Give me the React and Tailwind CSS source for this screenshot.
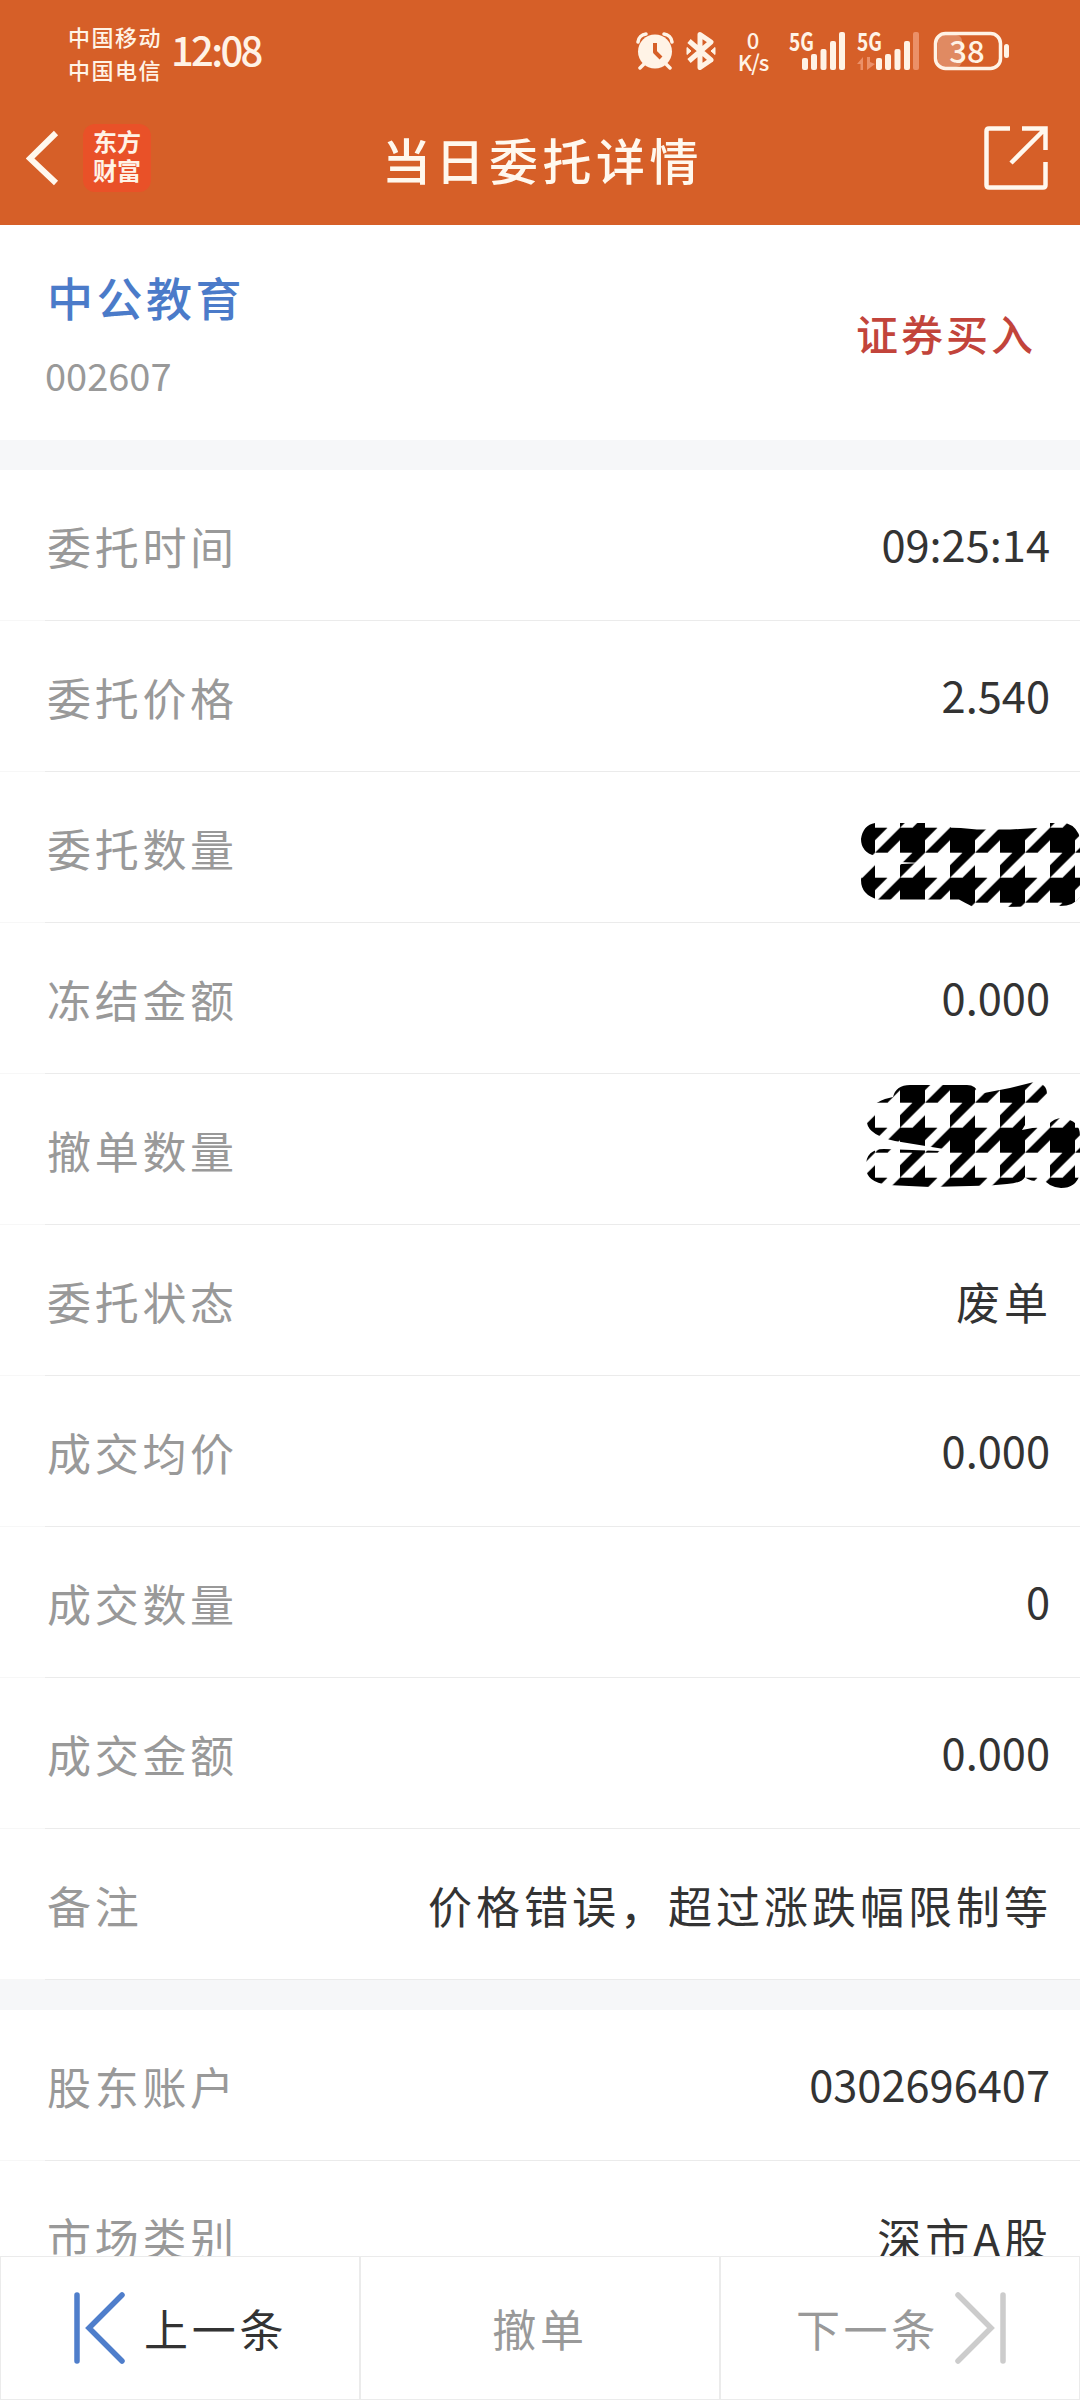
const orderRows = [
  { label: "委托时间", value: "09:25:14" },
  { label: "委托价格", value: "2.540" },
  { label: "委托数量", mask: "quantity" },
  { label: "冻结金额", value: "0.000" },
  { label: "撤单数量", mask: "cancelled" },
  { label: "委托状态", value: "废单", cjk: true },
  { label: "成交均价", value: "0.000" },
  { label: "成交数量", value: "0" },
  { label: "成交金额", value: "0.000" },
  { label: "备注", value: "价格错误，超过涨跌幅限制等", cjk: true },
];

const accountRows = [
  { label: "股东账户", value: "0302696407" },
  { label: "市场类别", value: "深市A股", cjk: true },
];

// scribbled areas that hide the quantities, 240x151 each
const masks = {
  quantity: {
    offset: 5.7,
    path: "M35 51 H85 L110 55 L137 57.5 H170 L196 56 L205 51 H226 Q238 55 240 67 V125 Q234 134 220 134 L160 135 H133 Q124 130 119 127.5 H38 Q21 123 21 108 Q22 96 35 92 H62 L82 91 L60 90 V88 L35 84 Q21 80 21 67 Q23 53 35 51 Z",
  },
  cancelled: {
    offset: 3.7,
    path: "M53 23 Q56 11 70 11 H127 Q136 11 139 20 L170 14 L192 8.5 Q207 8 207 20 L198 31 Q190 42 182 56 L208 51 Q214 44 222 44 Q240 46 240 62 V100 Q236 114 221 114 Q208 113 203 104 L195 107 Q188 106 185 103 Q182 109 167 110 L150 111.5 L90 113 L48 111 Q25 108 26 92 Q26 75 44 75 L100 77 L110 76 L55 67 Q29 61 27 49 Q27 31 45 25 Z",
  },
};

const Houndstooth = ({ name }) => {
  const { offset, path } = masks[name];
  return (
    <svg viewBox="0 0 240 151" className="-mr-[30px] h-[151px] w-[240px] shrink-0">
      <defs>
        <pattern id={name} x="10" y={offset} width="50" height="50" patternUnits="userSpaceOnUse">
          <path
            fill="#000"
            d="M0 0H25V25H0Z M25 0H37.5L25 12.5Z M50 0V12.5L37.5 25H25Z M12.5 25H25L0 50V37.5Z M25 37.5V50H12.5Z"
          />
        </pattern>
      </defs>
      <path d={path} fill={`url(#${name})`} />
    </svg>
  );
};

const Row = ({ label, value, cjk, mask }) => (
  <div className="relative flex h-[151px] shrink-0 items-center justify-between px-[30px]">
    <span className="ml-[17px] text-[44px] tracking-[3.7px] text-[#999]">{label}</span>
    {mask ? (
      <Houndstooth name={mask} />
    ) : (
      <span
        className={
          cjk
            ? "-mr-[2px] text-[44px] tracking-[4px] text-[#333]"
            : "mb-[3px] text-[43.4px] text-[#333]"
        }
      >
        {value}
      </span>
    )}
    <div className="absolute right-0 bottom-0 left-0 h-px bg-[#f7f7f7]" />
    <div className="absolute right-0 bottom-0 left-[45px] h-px bg-[#ebebeb]" />
  </div>
);

const Signal = ({ weak }) => (
  <svg viewBox="0 0 62 40" className="h-10 w-[62px] overflow-visible" fill="#fff3e6">
    <text
      x="0"
      y="18.500"
      fontSize="25"
      fontWeight="700"
      textLength="25"
      lengthAdjust="spacingAndGlyphs"
    >
      5G
    </text>
    <g transform={weak ? "translate(6)" : undefined}>
      <rect x="13" y="26" width="6" height="12" rx="2" />
      <rect x="22" y="22" width="6" height="16" rx="2" />
      <rect x="31.500" y="17" width="6" height="21" rx="2" />
      <rect x="41" y="9" width="6" height="29" rx="2" />
    </g>
    {weak ? (
      <>
        <rect x="56" y="0" width="6" height="38" rx="2" fill="#eb9068" />
        <path d="M0 32L6 25V38H3.500V32ZM10 25H13V30L18 32L10 38Z" fill="#eb9068" />
      </>
    ) : (
      <rect x="50" y="0" width="6" height="38" rx="2" />
    )}
  </svg>
);

const StatusBar = () => (
  <div className="flex h-[100px] items-start text-[#fff3e6]">
    <div className="mt-5 ml-[68px] text-[22px] leading-[33px] font-medium tracking-[1.500px]">
      <div>中国移动</div>
      <div>中国电信</div>
    </div>
    <div className="mt-[19px] ml-[9px] text-[40px] leading-[60px] font-medium tracking-[-2.700px]">
      12:08
    </div>

    <div className="mt-8 mr-[70px] ml-auto flex items-start">
      <svg viewBox="0 0 38 38" className="h-[38px] w-[38px]">
        <path d="M2 10A9 9 0 0 1 10 2M28 2A9 9 0 0 1 36 10M9 31L4 36M29 31L34 36" fill="none" stroke="#fff3e6" strokeWidth="3.500" strokeLinecap="round" />
        <circle cx="19" cy="19.500" r="17" fill="#fff3e6" />
        <path d="M19 11V20L25 26" fill="none" stroke="#d65f28" strokeWidth="4" strokeLinejoin="round" />
      </svg>
      <svg viewBox="0 0 30 38" className="ml-3 h-[38px] w-[30px]" fill="none" stroke="#fff3e6" strokeWidth="5" strokeLinejoin="round">
        <path d="M3 9L25 28L14 35.500V2.500L25 10L3 29" />
        <path d="M1 15.500L5 19L1 22.500ZM29 15.500L25 19L29 22.500Z" fill="#fff3e6" strokeWidth="1" />
      </svg>
      <div className="-mt-[4px] ml-[21px] w-8 text-center text-[22px] leading-[22px] font-medium">
        <div>0</div>
        <div className="tracking-[-1px]">K/s</div>
      </div>
      <div className="ml-5">
        <Signal />
      </div>
      <div className="ml-[6px]">
        <Signal weak />
      </div>
      <svg viewBox="0 0 76 38" className="ml-[15px] h-[38px] w-[76px] overflow-visible">
        <rect x="4" y="3" width="24" height="32" rx="6" fill="#e08a62" />
        <rect x="1.500" y="1.500" width="65" height="35" rx="10" fill="none" stroke="#fff3e6" strokeWidth="3.500" />
        <rect x="70" y="12" width="5" height="14" rx="2.500" fill="#fff3e6" />
        <text x="33" y="30.500" textAnchor="middle" fontSize="31" fontWeight="500" fill="#fff3e6">
          38
        </text>
      </svg>
    </div>
  </div>
);

const Header = () => (
  <header className="h-[225px] shrink-0 bg-[#d65f28]">
    <StatusBar />
    <div className="relative flex h-[125px] items-center justify-between">
      <div className="flex items-center">
        <svg viewBox="0 0 34 56" className="mb-[10px] ml-[26px] h-[56px] w-[34px]">
          <path d="M30 3L4 28.500L30 53" fill="none" stroke="#fff8ee" strokeWidth="6" />
        </svg>
        <div className="mb-[10px] ml-[23px] flex h-[68px] w-[68px] flex-col items-center justify-center rounded-xl bg-[#e95128] pb-[5px] text-[24px] leading-[29px] font-bold text-[#fff3e6]">
          <span>东方</span>
          <span>财富</span>
        </div>
      </div>
      <h1 className="absolute inset-x-0 top-[22px] pl-[5px] text-center text-[49px] leading-[74px] font-medium tracking-[4.500px] text-[#fff8ee]">
        当日委托详情
      </h1>
      <svg viewBox="0 0 64 64" className="mr-[32px] mb-[10px] h-16 w-16" fill="none" stroke="#fff8ee" strokeWidth="4.500">
        <path d="M26 2.500H5Q2.500 2.500 2.500 5V59Q2.500 61.500 5 61.500H59Q61.500 61.500 61.500 59V36" />
        <path d="M38 2.500H61.500V24M61 3L27 37" />
      </svg>
    </div>
  </header>
);

export default function App() {
  return (
    <div className="flex h-[2400px] w-[1080px] flex-col overflow-hidden bg-white font-['Noto_Sans_CJK_SC',sans-serif]">
      <Header />

      <section className="flex h-[215px] shrink-0 items-center justify-between pr-[44px] pl-[45px]">
        <div>
          <div className="pl-[2px] text-[46px] leading-[68px] font-medium tracking-[3.500px] text-[#4b7bc9]">中公教育</div>
          <div className="mt-[17px] text-[38px] leading-[56px] text-[#999]">002607</div>
        </div>
        <div className="text-[42px] font-medium tracking-[3px] text-[#c2443b]">证券买入</div>
      </section>

      <div className="h-[30px] shrink-0 bg-[#f6f7f9]" />

      <main className="flex min-h-0 flex-1 flex-col overflow-hidden">
        {orderRows.map((row) => (
          <Row key={row.label} {...row} />
        ))}
        <div className="h-[30px] shrink-0 bg-[#f6f7f9]" />
        {accountRows.map((row) => (
          <Row key={row.label} {...row} />
        ))}
      </main>

      <footer className="grid h-[144px] shrink-0 grid-cols-3 text-[44px] tracking-[3.700px] text-[#999]">
        <button className="flex items-center border border-[#ebebeb] pl-[73px]">
          <svg viewBox="0 0 51 72" className="h-[72px] w-[51px]" fill="none" stroke="#4f7ecb" strokeWidth="5.500" strokeLinecap="round">
            <path d="M3 3V69M48 3L15 36L48 69" />
          </svg>
          <span className="ml-[19px] text-[#333]">上一条</span>
        </button>
        <button className="border border-[#ebebeb]">撤单</button>
        <button className="flex items-center justify-end border border-[#ebebeb] pr-[73px]">
          <span className="mr-[16px]">下一条</span>
          <svg viewBox="0 0 51 72" className="h-[72px] w-[51px]" fill="none" stroke="#ccc" strokeWidth="5.500" strokeLinecap="round">
            <path d="M48 3V69M3 3L36 36L3 69" />
          </svg>
        </button>
      </footer>
    </div>
  );
}
